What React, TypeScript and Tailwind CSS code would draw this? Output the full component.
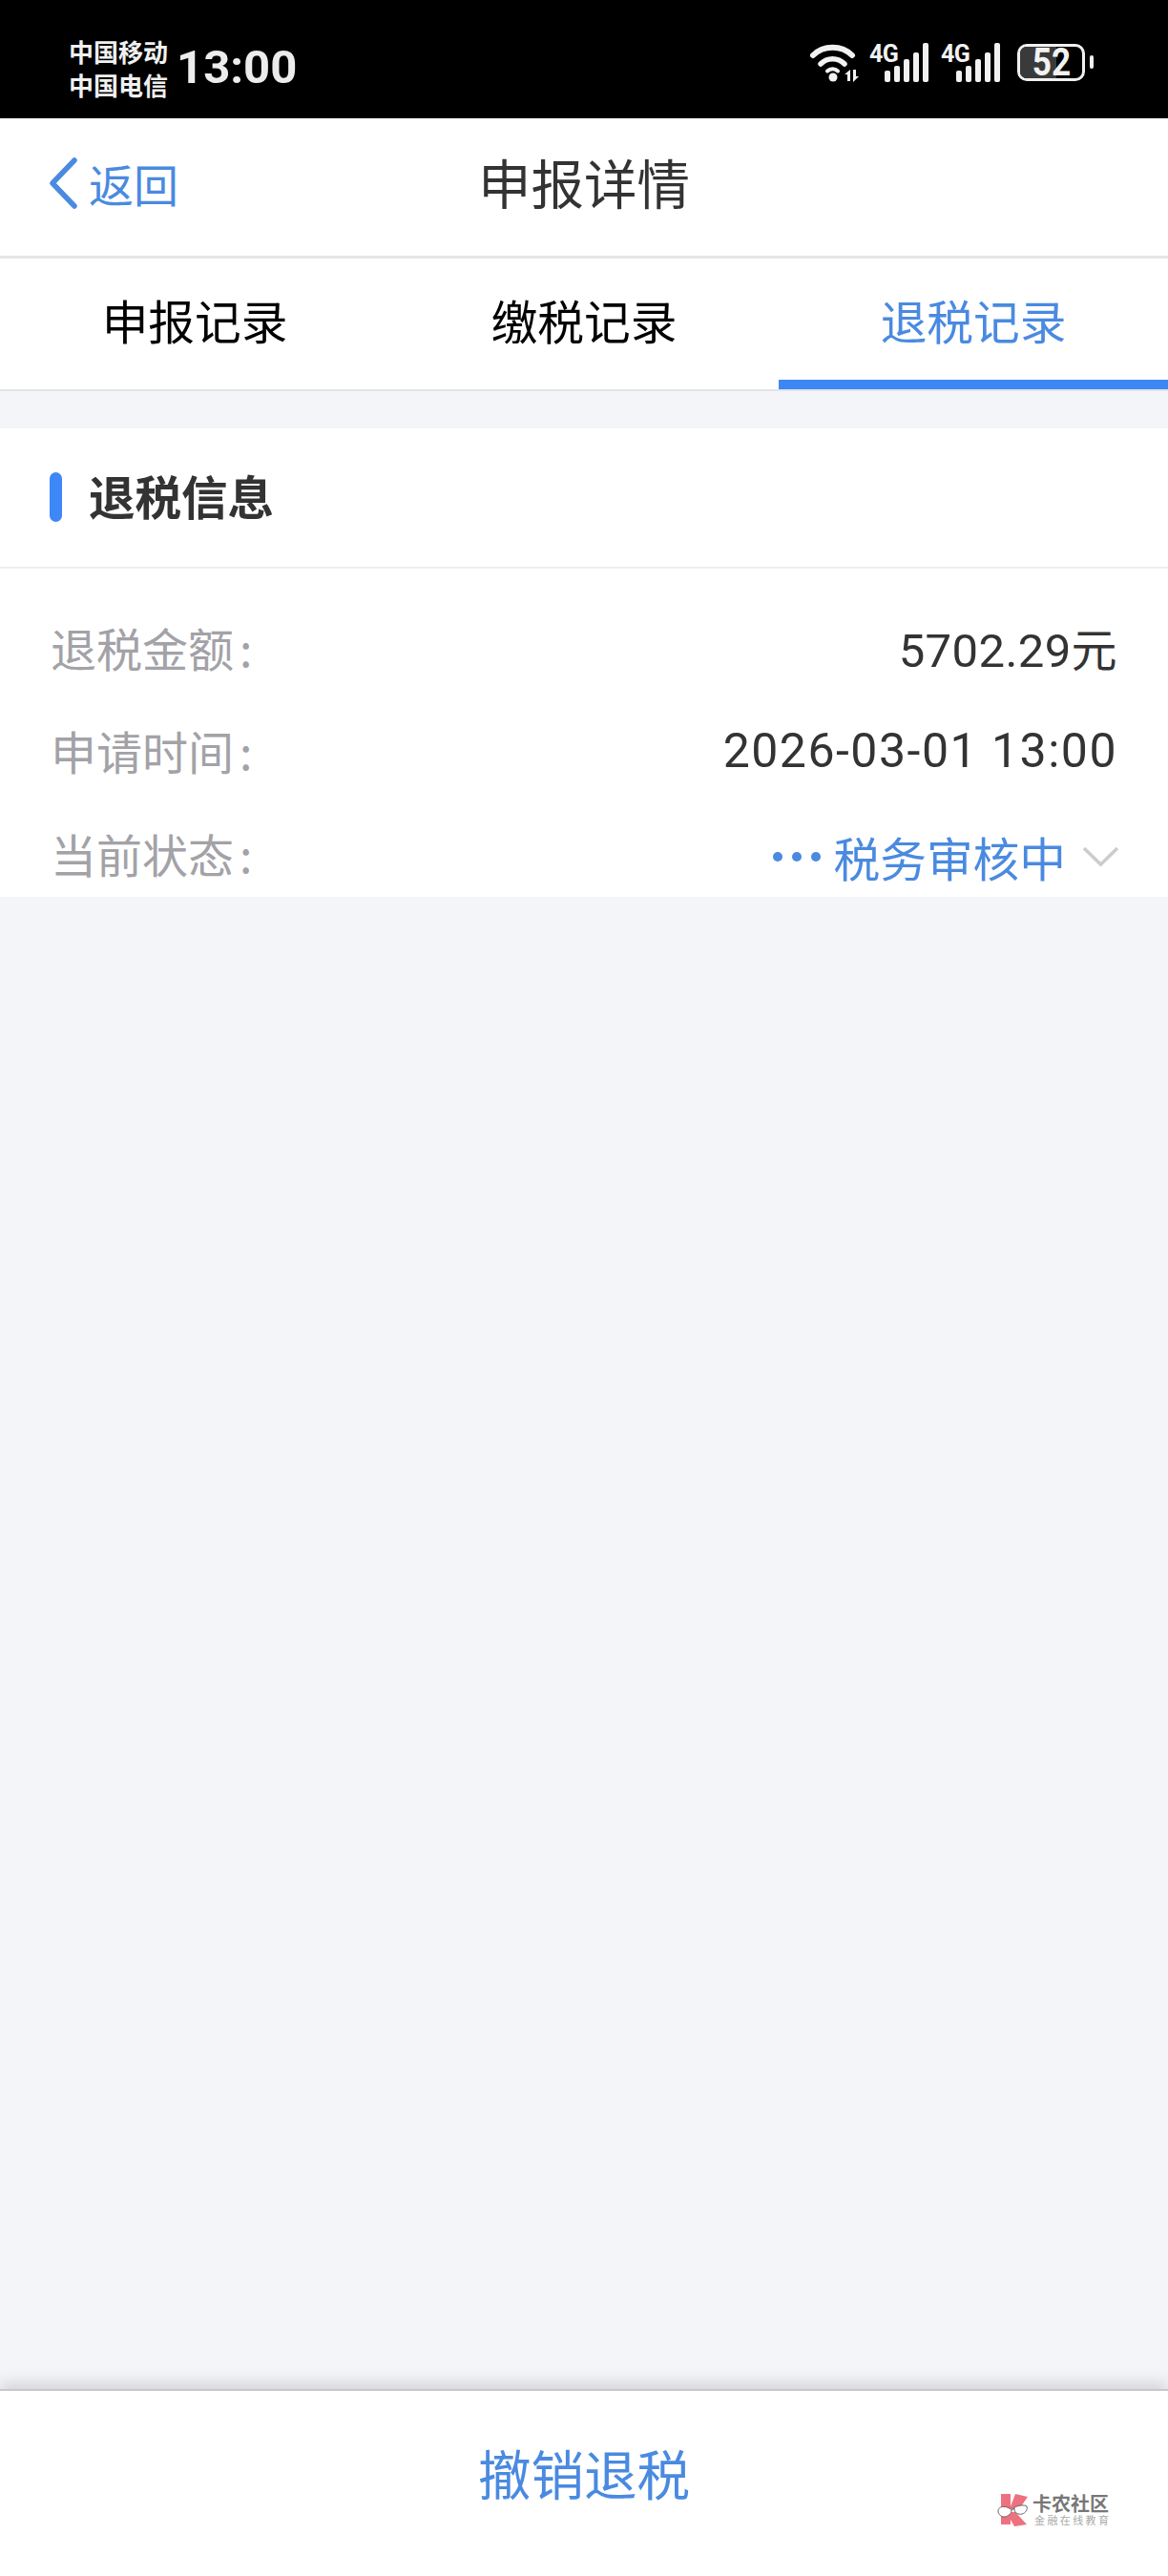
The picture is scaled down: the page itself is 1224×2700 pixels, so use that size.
const cjk = "font-['Noto_Sans_CJK_SC','Noto_Sans',sans-serif]";

function Wifi() {
  return (
    <svg width="52" height="41" viewBox="0 0 52 41" fill="none" className="mt-[1px]">
      <path d="M3 13 C14 2 33 2 44 13" stroke="#f2f2f2" strokeWidth="6" strokeLinecap="round" />
      <path d="M11 22 C18 15 29 15 36 22" stroke="#f2f2f2" strokeWidth="5.5" strokeLinecap="round" />
      <path d="M18 29.5 C21 26.5 26 26.5 29 29.5" stroke="#f2f2f2" strokeWidth="4" strokeLinecap="round" />
      <circle cx="24" cy="36" r="4.5" fill="#f2f2f2" />
      <path d="M42 28 V40 H39 V33 H36 Z" fill="#f2f2f2" />
      <path d="M45 28 H48 V35 H51 L45 41 Z" fill="#f2f2f2" />
    </svg>
  );
}

function Signal() {
  const bars = [12, 17, 24, 31, 41];
  return (
    <div className="relative w-[62px] h-[41px] flex items-end justify-end gap-[4px]">
      <span className="absolute left-0 -top-[1px] text-[25px] leading-[25px] font-bold text-[#f2f2f2] font-['Roboto',sans-serif] tracking-[-0.5px]">4G</span>
      {bars.map((h, i) => (
        <div key={i} className="w-[6px] rounded-[2px] bg-[#f2f2f2]" style={{ height: h }} />
      ))}
    </div>
  );
}

function Battery() {
  return (
    <div className="flex items-center gap-[5px]">
      <div className="relative w-[71px] h-[39px] rounded-[10px] border-[3px] border-[#f0f0f0] flex items-center justify-center">
        <div className="absolute left-0 top-0 bottom-0 w-[38px] rounded-l-[7px] bg-[#3a3a3a]" />
        <span className="relative text-[40px] leading-[47px] font-bold text-[#f2f2f2] font-['Roboto',sans-serif] scale-x-[0.88] h-[33px] flex items-center">52</span>
      </div>
      <div className="w-[4px] h-[14px] rounded-[2px] bg-[#f0f0f0]" />
    </div>
  );
}

function StatusBar() {
  return (
    <div className="h-[124px] bg-black flex items-center justify-between pl-[72px] pr-[78px] pt-[18px] shrink-0">
      <div className="flex items-center gap-[9px]">
        <div className={`flex flex-col text-[26px] leading-[35px] font-bold text-[#f0f0f0] ${cjk}`}>
          <span>中国移动</span>
          <span>中国电信</span>
        </div>
        <span className="text-[49px] leading-[60px] font-bold text-[#ececec] font-['Roboto',sans-serif]">13:00</span>
      </div>
      <div className="flex items-center -mt-[12px]">
        <Wifi />
        <div className="ml-[10px]"><Signal /></div>
        <div className="ml-[13px]"><Signal /></div>
        <div className="ml-[18px]"><Battery /></div>
      </div>
    </div>
  );
}

function Header() {
  return (
    <div className="relative h-[147px] bg-white border-b-[3px] border-[#e5e5e5] flex items-center justify-center shrink-0">
      <div className="absolute left-[51px] top-[41px] flex items-center gap-[12px]">
        <svg width="30" height="54" viewBox="0 0 30 54" fill="none">
          <path d="M27 3 L4 27 L27 51" stroke="#4a8ae0" strokeWidth="5.5" strokeLinecap="round" strokeLinejoin="round" />
        </svg>
        <span className={`text-[47px] leading-[54px] text-[#4a8ae0] ${cjk}`}>返回</span>
      </div>
      <span className={`text-[55.5px] leading-[60px] text-[#333333] -mt-[13px] ${cjk}`}>申报详情</span>
    </div>
  );
}

function Tabs() {
  const tabs = ["申报记录", "缴税记录", "退税记录"];
  return (
    <div className="h-[139px] bg-white border-b-[2px] border-[#e4e4e4] grid grid-cols-3 shrink-0">
      {tabs.map((t, i) => (
        <div key={t} className={`flex items-center justify-center ${i === 2 ? "border-b-[10px] border-[#3d87f5] pt-[8px]" : "pb-[10px]"}`}>
          <span className={`text-[48.7px] leading-[60px] ${i === 2 ? "text-[#4a8ae0] -mt-[8px]" : "text-black"} ${cjk}`}>{t}</span>
        </div>
      ))}
    </div>
  );
}

function Row({ label, children, h = "h-[108px]" }: { label: string; children: React.ReactNode; h?: string }) {
  return (
    <div className={`${h} flex justify-between items-start`}>
      <span className={`mt-[23px] text-[48px] leading-[60px] text-[#a2a2a7] ${cjk}`}>
        {label}
        <span className="ml-[6px]">:</span>
      </span>
      {children}
    </div>
  );
}

function Card() {
  return (
    <div className="mt-[39px] bg-white">
      <div className="h-[147px] border-b-[2px] border-[#eeeeee] flex items-center pl-[52px] gap-[28px]">
        <div className="w-[13px] h-[52px] rounded-full bg-[#3d87f7] -mt-[2px]" />
        <span className={`text-[48.5px] leading-[60px] font-bold text-[#333333] -mt-[6px] ${cjk}`}>退税信息</span>
      </div>
      <div className="h-[344px] overflow-hidden pl-[53px] pr-[53px] pt-[29px]">
        <Row label="退税金额">
          <span className="mt-[23px] text-[49px] leading-[60px] tracking-[0.4px] text-[#333333] font-['Roboto','Noto_Sans_CJK_SC',sans-serif]">
            5702.29<span className={`text-[48px] ${cjk}`}>元</span>
          </span>
        </Row>
        <Row label="申请时间">
          <span className="mt-[24px] text-[50px] leading-[60px] tracking-[1.5px] text-[#333333] font-['Roboto',sans-serif]">2026-03-01 13:00</span>
        </Row>
        <Row label="当前状态" h="h-[128px]">
          <div className="mt-[27px] flex items-center">
            <div className="flex gap-[10px] mr-[14px]">
              <span className="w-[10px] h-[10px] rounded-full bg-[#4a8ae0]" />
              <span className="w-[10px] h-[10px] rounded-full bg-[#4a8ae0]" />
              <span className="w-[10px] h-[10px] rounded-full bg-[#4a8ae0]" />
            </div>
            <span className={`text-[48.7px] leading-[60px] text-[#4a8ae0] ${cjk}`}>税务审核中</span>
            <svg width="39" height="22" viewBox="0 0 39 22" fill="none" className="ml-[17px] -mr-[2px]">
              <path d="M2 2 L19.5 19 L37 2" stroke="#cccccc" strokeWidth="3.5" />
            </svg>
          </div>
        </Row>
      </div>
    </div>
  );
}

function Watermark() {
  return (
    <div className="absolute left-[1044px] top-[2613px] flex items-start">
      <svg width="34" height="36" viewBox="0 0 34 36" fill="none">
        <path d="M5 1 H15 V14 L20 1 L33 4 L24 17 L5 17 Z" fill="#ee7180" />
        <path d="M5 20 H15 L20 20 L32 33 L19 35 L15 28 V33 H5 Z" fill="#ee7180" />
        <path d="M2 19 C2 15 6 14 9 14.5 C13 15 16 17 16 19 C15 23 11 25 8 25 C5 25 2 22 2 19 Z" fill="#fff" stroke="#666" strokeWidth="1" />
        <path d="M19 15 C23 13 30 12 32 14 C33 17 31 21 27 22 C23 23 20 21 19 18 Z" fill="#fff" stroke="#666" strokeWidth="1" />
        <path d="M16 18 L19 16" stroke="#666" strokeWidth="1" />
      </svg>
      <div className="ml-[4px] flex flex-col">
        <span className={`text-[20px] leading-[22px] font-bold text-[#777777] ${cjk}`}>卡农社区</span>
        <span className={`ml-[2px] text-[11px] leading-[13px] tracking-[2.4px] text-[#aaaaaa] whitespace-nowrap ${cjk}`}>金融在线教育</span>
      </div>
    </div>
  );
}

export default function App() {
  return (
    <div className="relative w-[1224px] h-[2700px] flex flex-col bg-[#f3f5f9] overflow-hidden">
      <StatusBar />
      <Header />
      <Tabs />
      <div className="flex-1">
        <Card />
      </div>
      <div className="relative h-[196px] shrink-0 bg-white border-t-[2px] border-[#c8c8c8] shadow-[0_-6px_16px_rgba(0,0,0,0.14)] flex items-center justify-center pb-[24px]">
        <span className={`text-[55.5px] leading-[64px] text-[#4a8ae0] ${cjk}`}>撤销退税</span>
      </div>
      <Watermark />
    </div>
  );
}
